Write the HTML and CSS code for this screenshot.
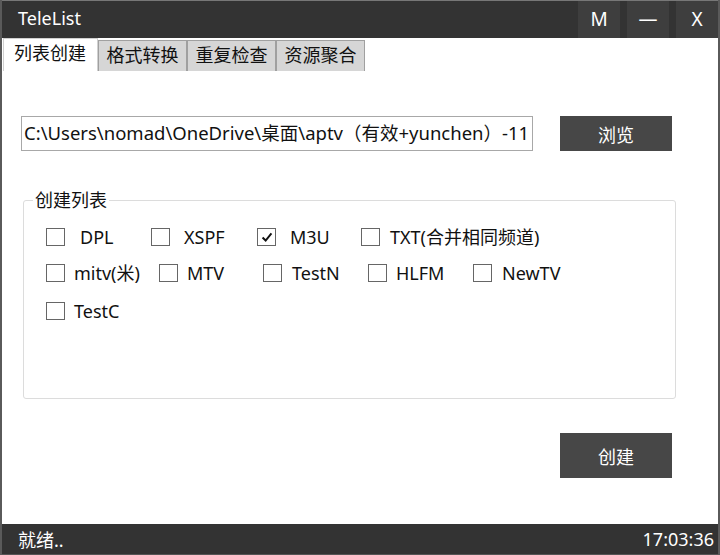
FILE: index.html
```html
<!DOCTYPE html>
<html>
<head>
<meta charset="utf-8">
<link rel="stylesheet" href="styles.css">
</head>
<body>
<div class="window">
  <div class="titlebar">
    <div class="title">TeleList</div>
    <div class="tbtn">M</div>
    <div class="tbtn">—</div>
    <div class="tbtn">X</div>
  </div>
  <div class="tabs">
    <div class="tab active">列表创建</div>
    <div class="tab">格式转换</div>
    <div class="tab">重复检查</div>
    <div class="tab">资源聚合</div>
  </div>
  <div class="content">
    <div class="pathrow">
      <div class="pathbox">C:\Users\nomad\OneDrive\桌面\aptv（有效+yunchen）-11</div>
      <div class="btn browse">浏览</div>
    </div>
    <fieldset class="group">
      <legend>创建列表</legend>
      <div class="row row1">
        <label class="cb"><span class="box"></span><span class="lbl g15">DPL</span></label>
        <label class="cb"><span class="box"></span><span class="lbl g14">XSPF</span></label>
        <label class="cb"><span class="box checked"><svg viewBox="0 0 18 18" width="16" height="16"><path d="M4 9.5 L7.5 13 L14 5" fill="none" stroke="#111" stroke-width="2.2"/></svg></span><span class="lbl g14">M3U</span></label>
        <label class="cb"><span class="box"></span><span class="lbl g10">TXT(合并相同频道)</span></label>
      </div>
      <div class="row row2">
        <label class="cb"><span class="box"></span><span class="lbl g9">mitv(米)</span></label>
        <label class="cb"><span class="box"></span><span class="lbl g9">MTV</span></label>
        <label class="cb"><span class="box"></span><span class="lbl g10">TestN</span></label>
        <label class="cb"><span class="box"></span><span class="lbl g9">HLFM</span></label>
        <label class="cb"><span class="box"></span><span class="lbl g10">NewTV</span></label>
      </div>
      <div class="row row3">
        <label class="cb"><span class="box"></span><span class="lbl g9">TestC</span></label>
      </div>
    </fieldset>
    <div class="createrow">
      <div class="btn create">创建</div>
    </div>
  </div>
  <div class="statusbar">
    <div class="status">就绪..</div>
    <div class="clock">17:03:36</div>
  </div>
</div>
</body>
</html>
```

FILE: styles.css
```css
* { box-sizing: border-box; }
html, body { margin: 0; padding: 0; }
body {
  width: 720px;
  height: 555px;
  overflow: hidden;
  background: #fff;
  font-family: "Noto Sans", "Noto Sans CJK SC", sans-serif;
  color: #111;
}
.window {
  width: 720px;
  height: 555px;
  display: flex;
  flex-direction: column;
  border-left: 2px solid #5a5a5a;
  border-right: 2px solid #5a5a5a;
  background: #fff;
}
.titlebar {
  height: 38px;
  background: #333333;
  border-top: 1px solid #777;
  display: flex;
  align-items: stretch;
  color: #fff;
  flex: none;
}
.title {
  flex: 1;
  padding-left: 16px;
  font-size: 18px;
  line-height: 34px;
}
.tbtn {
  width: 42px;
  margin-left: 7px;
  background: #3e3e3e;
  font-size: 19px;
  display: flex;
  align-items: center;
  justify-content: center;
  padding-bottom: 2px;
}
.tabs {
  height: 33px;
  display: flex;
  align-items: flex-end;
  padding-left: 1px;
  flex: none;
}
.tab {
  height: 31px;
  font-size: 18px;
  line-height: 29px;
  background: #d6d6d6;
  border: 1px solid #a0a0a0;
  border-bottom: none;
  color: #111;
  width: 89px;
  text-align: center;
}
.tab.active {
  background: #fff;
  height: 33px;
  border-color: #d0d0d0;
  width: 95px;
  text-align: left;
  padding-left: 10px;
}
.content {
  flex: 1;
  display: flex;
  flex-direction: column;
  padding-left: 19px;
}
.pathrow {
  display: flex;
  margin-top: 45px;
  height: 35px;
}
.pathbox {
  width: 512px;
  height: 35px;
  border: 1px solid #a8a8a8;
  font-size: 18.5px;
  line-height: 31px;
  padding-left: 2px;
  white-space: nowrap;
  overflow: hidden;
}
.btn {
  background: #474747;
  color: #fff;
  font-size: 18px;
  display: flex;
  align-items: center;
  justify-content: center;
}
.browse {
  width: 112px;
  margin-left: 27px;
}
.group {
  margin: 39px 0 0 2px;
  width: 653px;
  height: 209px;
  border: 1px solid #dcdcdc;
  border-radius: 3px;
  padding: 0 0 0 22px;
}
.group legend {
  font-size: 18px;
  padding: 0 2px;
  margin-left: -13px;
  line-height: 20px;
}
.row {
  display: grid;
  height: 18px;
  align-items: center;
}
.row1 { margin-top: 17px; grid-template-columns: 105px 106px 104px auto; }
.row2 { margin-top: 18px; grid-template-columns: 113px 104px 105px 105px auto; }
.row3 { margin-top: 20px; grid-template-columns: auto; }
.cb {
  display: flex;
  align-items: center;
  font-size: 18px;
  white-space: nowrap;
}
.box {
  width: 19px;
  height: 18px;
  border: 1px solid #666;
  background: #fff;
  flex: none;
  display: flex;
  align-items: center;
  justify-content: center;
}
.lbl { line-height: 20px; }
.g15 { margin-left: 15px; }
.g14 { margin-left: 14px; }
.g10 { margin-left: 10px; }
.g9 { margin-left: 9px; }
.createrow {
  display: flex;
  margin-top: 34px;
}
.create {
  width: 112px;
  height: 45px;
  margin-left: 539px;
}
.statusbar {
  margin-top: auto;
  height: 31px;
  background: #333333;
  color: #fff;
  display: flex;
  align-items: center;
  justify-content: space-between;
  font-size: 18px;
  flex: none;
  border-bottom: 1px solid #555;
}
.status { padding-left: 16px; }
.clock { padding-right: 4px; }
```
